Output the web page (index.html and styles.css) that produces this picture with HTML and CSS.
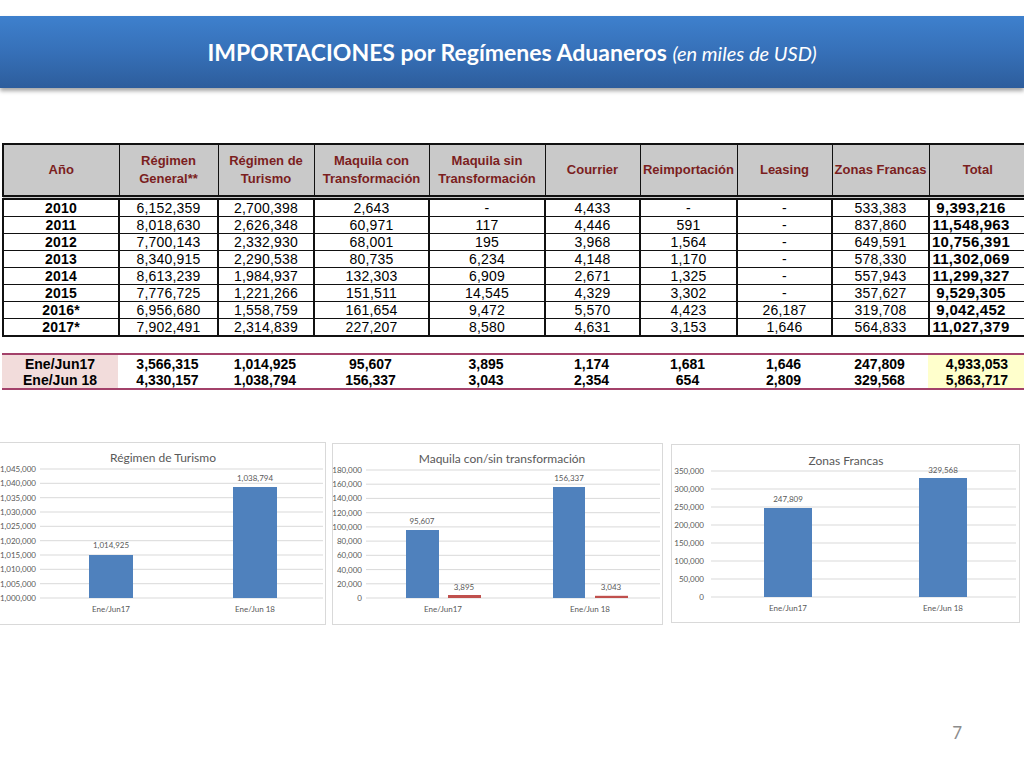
FILE: index.html
```html
<!DOCTYPE html>
<html lang="es">
<head>
<meta charset="utf-8">
<title>Importaciones por Regímenes Aduaneros</title>
<link rel="stylesheet" href="styles.css">
</head>
<body>
<header class="title-bar">
  <h1><span class="title-main">IMPORTACIONES por Regímenes Aduaneros</span> <span class="title-sub">(en miles de USD)</span></h1>
</header>

<table class="data">
  <colgroup>
    <col class="c1"><col class="c2"><col class="c3"><col class="c4"><col class="c5"><col class="c6"><col class="c7"><col class="c8"><col class="c9"><col class="c10">
  </colgroup>
  <thead>
    <tr>
      <th>Año</th>
      <th>Régimen<br>General**</th>
      <th>Régimen de<br>Turismo</th>
      <th>Maquila con<br>Transformación</th>
      <th>Maquila sin<br>Transformación</th>
      <th>Courrier</th>
      <th>Reimportación</th>
      <th>Leasing</th>
      <th>Zonas Francas</th>
      <th>Total</th>
    </tr>
  </thead>
  <tbody>
    <tr><td class="yr">2010</td><td>6,152,359</td><td>2,700,398</td><td>2,643</td><td>-</td><td>4,433</td><td>-</td><td>-</td><td>533,383</td><td class="tot">9,393,216</td></tr>
    <tr><td class="yr">2011</td><td>8,018,630</td><td>2,626,348</td><td>60,971</td><td>117</td><td>4,446</td><td>591</td><td>-</td><td>837,860</td><td class="tot">11,548,963</td></tr>
    <tr><td class="yr">2012</td><td>7,700,143</td><td>2,332,930</td><td>68,001</td><td>195</td><td>3,968</td><td>1,564</td><td>-</td><td>649,591</td><td class="tot">10,756,391</td></tr>
    <tr><td class="yr">2013</td><td>8,340,915</td><td>2,290,538</td><td>80,735</td><td>6,234</td><td>4,148</td><td>1,170</td><td>-</td><td>578,330</td><td class="tot">11,302,069</td></tr>
    <tr><td class="yr">2014</td><td>8,613,239</td><td>1,984,937</td><td>132,303</td><td>6,909</td><td>2,671</td><td>1,325</td><td>-</td><td>557,943</td><td class="tot">11,299,327</td></tr>
    <tr><td class="yr">2015</td><td>7,776,725</td><td>1,221,266</td><td>151,511</td><td>14,545</td><td>4,329</td><td>3,302</td><td>-</td><td>357,627</td><td class="tot">9,529,305</td></tr>
    <tr><td class="yr">2016*</td><td>6,956,680</td><td>1,558,759</td><td>161,654</td><td>9,472</td><td>5,570</td><td>4,423</td><td>26,187</td><td>319,708</td><td class="tot">9,042,452</td></tr>
    <tr><td class="yr">2017*</td><td>7,902,491</td><td>2,314,839</td><td>227,207</td><td>8,580</td><td>4,631</td><td>3,153</td><td>1,646</td><td>564,833</td><td class="tot">11,027,379</td></tr>
  </tbody>
</table>

<table class="period">
  <colgroup>
    <col class="c1"><col class="c2"><col class="c3"><col class="c4"><col class="c5"><col class="c6"><col class="c7"><col class="c8"><col class="c9"><col class="c10">
  </colgroup>
  <tbody>
    <tr><td class="lbl">Ene/Jun17</td><td>3,566,315</td><td>1,014,925</td><td>95,607</td><td>3,895</td><td>1,174</td><td>1,681</td><td>1,646</td><td>247,809</td><td class="ptot">4,933,053</td></tr>
    <tr><td class="lbl">Ene/Jun 18</td><td>4,330,157</td><td>1,038,794</td><td>156,337</td><td>3,043</td><td>2,354</td><td>654</td><td>2,809</td><td>329,568</td><td class="ptot">5,863,717</td></tr>
  </tbody>
</table>

<section class="charts">
  <figure class="chart chart-a">
    <svg width="334" height="181" viewBox="0 0 334 181">
      <text class="ctitle" x="172" y="19" text-anchor="middle">Régimen de Turismo</text>
      <g class="grid">
        <line x1="49" y1="26" x2="332" y2="26"/>
        <line x1="49" y1="40.3" x2="332" y2="40.3"/>
        <line x1="49" y1="54.7" x2="332" y2="54.7"/>
        <line x1="49" y1="69" x2="332" y2="69"/>
        <line x1="49" y1="83.3" x2="332" y2="83.3"/>
        <line x1="49" y1="97.7" x2="332" y2="97.7"/>
        <line x1="49" y1="112" x2="332" y2="112"/>
        <line x1="49" y1="126.3" x2="332" y2="126.3"/>
        <line x1="49" y1="140.7" x2="332" y2="140.7"/>
        <line x1="49" y1="155" x2="332" y2="155"/>
      </g>
      <g class="axis" text-anchor="end">
        <text x="45" y="29">1,045,000</text>
        <text x="45" y="43.3">1,040,000</text>
        <text x="45" y="57.7">1,035,000</text>
        <text x="45" y="72">1,030,000</text>
        <text x="45" y="86.3">1,025,000</text>
        <text x="45" y="100.7">1,020,000</text>
        <text x="45" y="115">1,015,000</text>
        <text x="45" y="129.3">1,010,000</text>
        <text x="45" y="143.7">1,005,000</text>
        <text x="45" y="158">1,000,000</text>
      </g>
      <rect class="bar-blue" x="98" y="112" width="44" height="43"/>
      <rect class="bar-blue" x="242" y="44" width="44" height="111"/>
      <g class="vals" text-anchor="middle">
        <text x="120" y="105">1,014,925</text>
        <text x="264" y="38">1,038,794</text>
      </g>
      <g class="axis" text-anchor="middle">
        <text x="120" y="169">Ene/Jun17</text>
        <text x="264" y="169">Ene/Jun 18</text>
      </g>
    </svg>
  </figure>

  <figure class="chart chart-b">
    <svg width="329" height="180" viewBox="0 0 329 180">
      <text class="ctitle" x="169" y="19" text-anchor="middle">Maquila con/sin transformación</text>
      <g class="grid">
        <line x1="33" y1="26" x2="327" y2="26"/>
        <line x1="33" y1="40.2" x2="327" y2="40.2"/>
        <line x1="33" y1="54.4" x2="327" y2="54.4"/>
        <line x1="33" y1="68.7" x2="327" y2="68.7"/>
        <line x1="33" y1="82.9" x2="327" y2="82.9"/>
        <line x1="33" y1="97.1" x2="327" y2="97.1"/>
        <line x1="33" y1="111.3" x2="327" y2="111.3"/>
        <line x1="33" y1="125.6" x2="327" y2="125.6"/>
        <line x1="33" y1="139.8" x2="327" y2="139.8"/>
        <line x1="33" y1="154" x2="327" y2="154"/>
      </g>
      <g class="axis" text-anchor="end">
        <text x="29" y="29">180,000</text>
        <text x="29" y="43.2">160,000</text>
        <text x="29" y="57.4">140,000</text>
        <text x="29" y="71.7">120,000</text>
        <text x="29" y="85.9">100,000</text>
        <text x="29" y="100.1">80,000</text>
        <text x="29" y="114.3">60,000</text>
        <text x="29" y="128.6">40,000</text>
        <text x="29" y="142.8">20,000</text>
        <text x="29" y="157">0</text>
      </g>
      <rect class="bar-blue" x="73" y="86" width="33" height="68"/>
      <rect class="bar-red" x="115" y="151" width="33" height="3"/>
      <rect class="bar-blue" x="220" y="43" width="32" height="111"/>
      <rect class="bar-red" x="262" y="151.8" width="33" height="2.2"/>
      <g class="vals" text-anchor="middle">
        <text x="89" y="80">95,607</text>
        <text x="131" y="146">3,895</text>
        <text x="236" y="37">156,337</text>
        <text x="278" y="146">3,043</text>
      </g>
      <g class="axis" text-anchor="middle">
        <text x="110" y="168">Ene/Jun17</text>
        <text x="257" y="168">Ene/Jun 18</text>
      </g>
    </svg>
  </figure>

  <figure class="chart chart-c">
    <svg width="347" height="177" viewBox="0 0 347 177">
      <text class="ctitle" x="174" y="20" text-anchor="middle">Zonas Francas</text>
      <g class="grid">
        <line x1="39" y1="26" x2="344" y2="26"/>
        <line x1="39" y1="44" x2="344" y2="44"/>
        <line x1="39" y1="62" x2="344" y2="62"/>
        <line x1="39" y1="80" x2="344" y2="80"/>
        <line x1="39" y1="98" x2="344" y2="98"/>
        <line x1="39" y1="116" x2="344" y2="116"/>
        <line x1="39" y1="134" x2="344" y2="134"/>
        <line x1="39" y1="152" x2="344" y2="152"/>
      </g>
      <g class="axis" text-anchor="end">
        <text x="32" y="29">350,000</text>
        <text x="32" y="47">300,000</text>
        <text x="32" y="65">250,000</text>
        <text x="32" y="83">200,000</text>
        <text x="32" y="101">150,000</text>
        <text x="32" y="119">100,000</text>
        <text x="32" y="137">50,000</text>
        <text x="32" y="155">0</text>
      </g>
      <rect class="bar-blue" x="92" y="63" width="48" height="89"/>
      <rect class="bar-blue" x="247" y="33" width="48" height="119"/>
      <g class="vals" text-anchor="middle">
        <text x="116" y="57">247,809</text>
        <text x="271" y="28">329,568</text>
      </g>
      <g class="axis" text-anchor="middle">
        <text x="116" y="166">Ene/Jun17</text>
        <text x="271" y="166">Ene/Jun 18</text>
      </g>
    </svg>
  </figure>
</section>

<footer class="page-num">7</footer>
</body>
</html>
```

FILE: styles.css
```css
html, body {
  margin: 0;
  padding: 0;
  background: #ffffff;
}

body {
  width: 1024px;
  height: 768px;
  overflow: hidden;
  font-family: "Liberation Sans", Arial, sans-serif;
  color: #000;
}

/* ---------- title bar ---------- */
.title-bar {
  margin-top: 16px;
  height: 72px;
  background: linear-gradient(to bottom, #3e80cd 0%, #3670b8 50%, #2d5d9c 100%);
  box-shadow: 0 3px 4px rgba(0, 0, 0, 0.35);
  display: flex;
  align-items: center;
  justify-content: center;
}

.title-bar h1 {
  margin: 0;
  color: #ffffff;
  font-family: Lato, "Open Sans", sans-serif;
  font-size: 23px;
  line-height: 1;
  font-weight: 700;
  white-space: nowrap;
}

.title-sub {
  font-weight: 400;
  font-style: italic;
  font-size: 20px;
}

/* ---------- tables ---------- */
table {
  border-collapse: collapse;
  table-layout: fixed;
  width: 1024px;
  margin-left: 2px;
  font-size: 14px;
}

col.c1 { width: 116px; }
col.c2 { width: 99px; }
col.c3 { width: 96px; }
col.c4 { width: 115px; }
col.c5 { width: 116px; }
col.c6 { width: 95px; }
col.c7 { width: 97px; }
col.c8 { width: 95px; }
col.c9 { width: 97px; }
col.c10 { width: 98px; }

.data {
  margin-top: 55px;
  border: 2px solid #111;
}

.data th {
  background: #c9c9c9;
  color: #7b1e1e;
  font-size: 13px;
  font-weight: 700;
  line-height: 18px;
  height: 50px;
  padding: 0;
  border: 1px solid #111;
  border-bottom: 5px double #111;
  text-align: center;
  vertical-align: middle;
}

.data td {
  height: 16px;
  padding: 0;
  line-height: 16px;
  border: 1px solid #111;
  border-left-width: 2px;
  border-right-width: 2px;
  text-align: center;
  letter-spacing: 0.2px;
}

.data td.yr,
.data td.tot {
  font-weight: 700;
}

.data td.tot {
  font-size: 15px;
  letter-spacing: 0.3px;
  padding-right: 14px;
}

.period {
  margin-top: 16px;
  border-top: 2px solid #a3416a;
  border-bottom: 2px solid #a3416a;
}

.period td {
  height: 16px;
  line-height: 16px;
  padding: 0;
  font-weight: 700;
  text-align: center;
}

.period tr:first-child td {
  padding-top: 1px;
}

.period td.lbl {
  background: #f2dcdb;
}

.period td.ptot {
  background: #ffffcc;
}

/* ---------- charts ---------- */
.charts {
  display: flex;
  align-items: flex-start;
  margin-top: 52px;
}

.chart {
  margin: 0;
  border: 1px solid #d9d9d9;
  background: #fff;
  line-height: 0;
}

.chart svg {
  display: block;
}

.chart-a {
  margin-left: -10px;
}

.chart-b {
  margin-left: 6px;
  margin-top: 1px;
}

.chart-c {
  margin-left: 8px;
  margin-top: 2px;
}

.ctitle {
  font-family: Lato, "Open Sans", sans-serif;
  font-size: 12px;
  fill: #595959;
}

.axis text,
.vals text {
  font-family: Lato, "Open Sans", sans-serif;
  font-size: 8px;
  fill: #595959;
}

.grid line {
  stroke: #d9d9d9;
  stroke-width: 1;
}

.bar-blue { fill: #4f81bd; }
.bar-red { fill: #c0504d; }

/* ---------- page number ---------- */
.page-num {
  margin-top: 97px;
  padding-right: 62px;
  text-align: right;
  font-family: Lato, "Open Sans", sans-serif;
  font-size: 17px;
  color: #8c8c8c;
}
```
